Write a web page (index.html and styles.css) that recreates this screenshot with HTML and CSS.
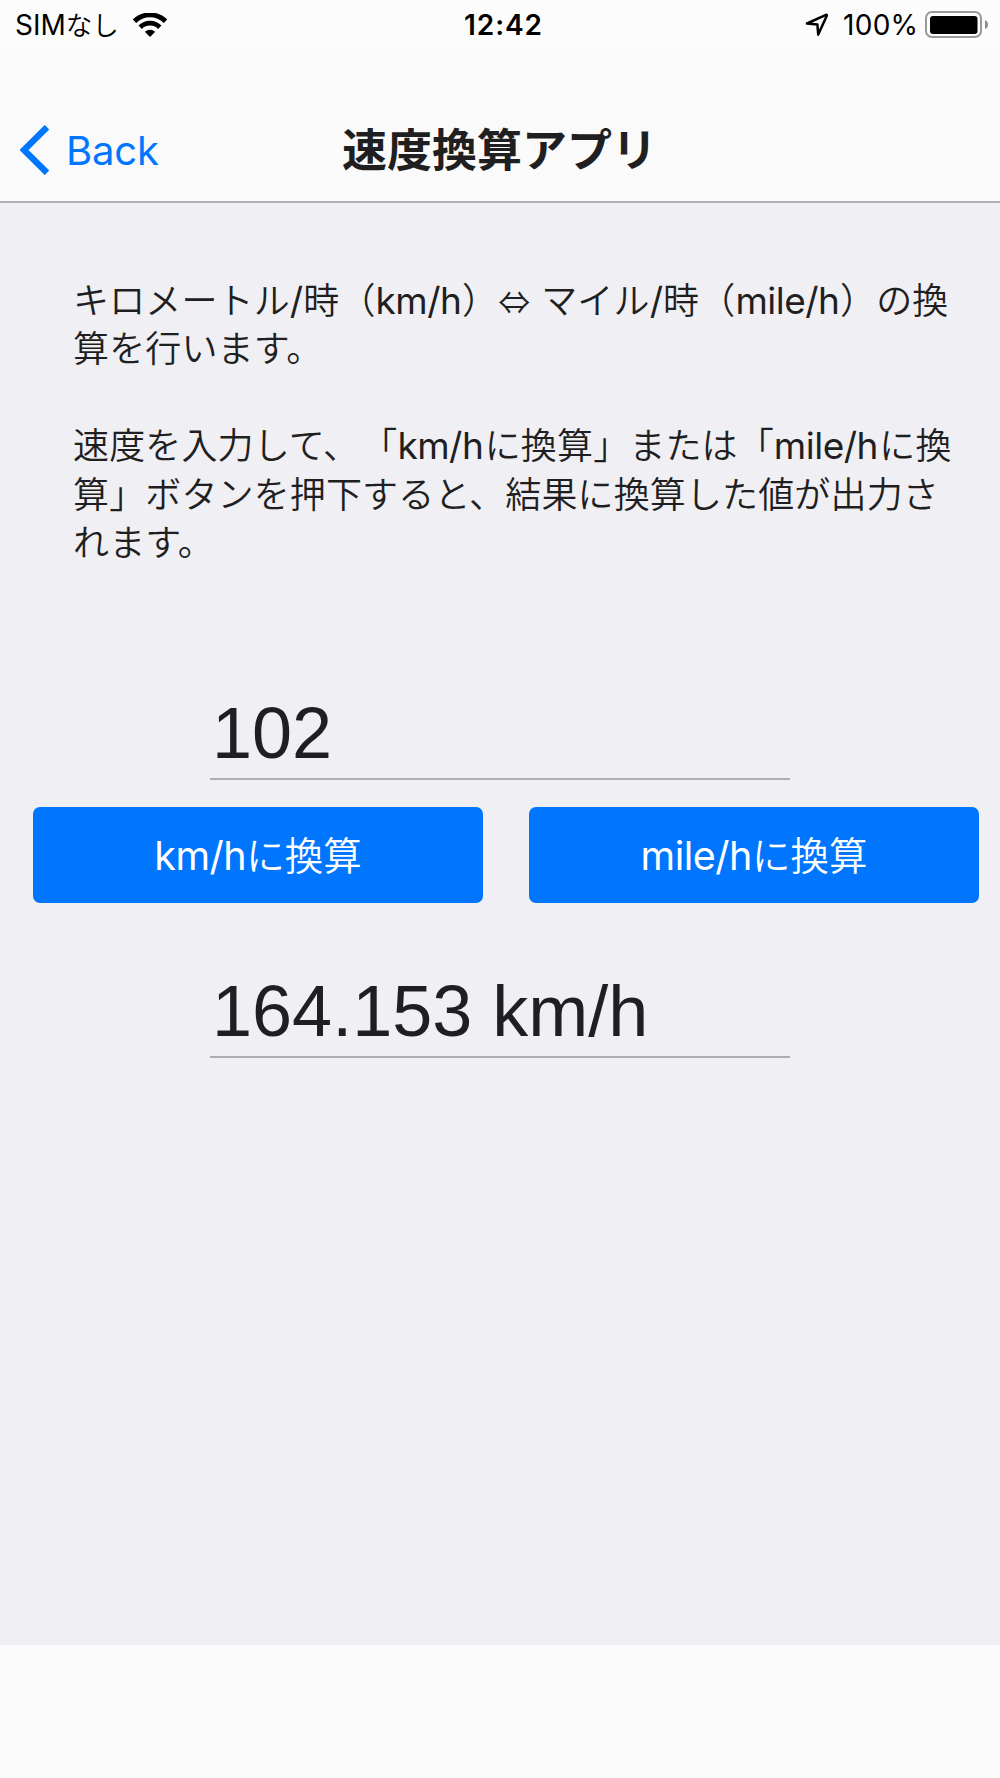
FILE: index.html
```html
<!DOCTYPE html>
<html lang="ja">
<head>
  <meta charset="UTF-8" />
  <meta name="viewport" content="width=device-width, initial-scale=1.0" />
  <title>速度換算アプリ</title>
  <link rel="stylesheet" href="styles.css">
</head>
<body>
<div class="status-bar">
  <div class="status-left">
    <span class="carrier">SIM<span class="kana">なし</span></span>
    <svg class="wifi" width="34" height="24" viewBox="0 0 34 24">
      <path d="M1.5 8.2 A22 22 0 0 1 32.5 8.2" fill="none" stroke="#000" stroke-width="4.8"/>
      <path d="M7.2 14.2 A14 14 0 0 1 26.8 14.2" fill="none" stroke="#000" stroke-width="4.8"/>
      <path d="M11.8 18.8 Q17 14.8 22.2 18.8 L17 24 Z" fill="#000"/>
    </svg>
  </div>
  <span class="clock">12:42</span>
  <div class="status-right">
    <svg class="location" width="24" height="24" viewBox="0 0 24 24">
      <path d="M2 10.5 L21 1.9 Q22.2 1.6 21.7 3 L13.2 21.6 L12.4 11.5 Z" fill="none" stroke="#000" stroke-width="2.5" stroke-linejoin="round"/>
    </svg>
    <span class="percent">100%</span>
    <svg class="battery" width="64" height="28" viewBox="0 0 64 28">
      <rect x="1" y="1" width="55" height="25" rx="6" fill="none" stroke="#999" stroke-width="2"/>
      <rect x="5" y="5" width="47.5" height="18" rx="3" fill="#000"/>
      <path d="M60 9 Q63 10.500 63 13.500 Q63 16.500 60 18 Z" fill="#8c8c8c"/>
    </svg>
  </div>
</div>
<header class="nav-bar">
  <a class="back">
    <svg width="30" height="50" viewBox="0 0 30 50"><path d="M27 2.200 L4 25 L27 47.800" fill="none" stroke="#0076ff" stroke-width="6.4"/></svg>
    <span>Back</span>
  </a>
  <h1>速度換算アプリ</h1>
</header>
<main class="content">
  <p>キロメートル<span class="en">/</span>時（<span class="en">km/h</span>）<span class="arrow">⇔</span>マイル<span class="en">/</span>時（<span class="en">mile/h</span>）の換<br>算を行います。</p>
  <p>速度を入力して、<span class="quote">「</span><span class="en">km/h</span>に換算」または「<span class="en">mile/h</span>に換<br>算」ボタンを押下すると、結果に換算した値が出力さ<br>れます。</p>
  <input class="value" type="text" id="speed" value="102">
  <div class="buttons">
    <button onclick="toKm()"><span class="en">km/h</span>に換算</button>
    <button onclick="toMile()"><span class="en">mile/h</span>に換算</button>
  </div>
  <input class="value" type="text" id="result" value="164.153 km/h" readonly>
</main>
<script>
const KM_PER_MILE = 1.609344;

function toKm() {
  const v = parseFloat(document.getElementById("speed").value);
  if (isNaN(v)) return;
  document.getElementById("result").value = (v * KM_PER_MILE).toFixed(3) + " km/h";
}

function toMile() {
  const v = parseFloat(document.getElementById("speed").value);
  if (isNaN(v)) return;
  document.getElementById("result").value = (v / KM_PER_MILE).toFixed(3) + " mile/h";
}
</script>
</body>
</html>
```
FILE: styles.css
```css
* {
  box-sizing: border-box;
}
body {
  margin: 0;
  height: 1778px;
  background: #fbfbfb;
  color: #1f1f21;
  font-family: Inter, 'Noto Sans CJK JP', sans-serif;
  text-spacing-trim: space-all;
}
.status-bar {
  display: grid;
  grid-template-columns: 1fr auto 1fr;
  align-items: center;
  height: 48px;
  padding: 0 11px 0 15px;
  background: #fcfcfc;
  color: #000;
  font-size: 28px;
  line-height: 50px;
}
.status-left, .status-right {
  display: flex;
  align-items: center;
}
.status-right {
  justify-content: flex-end;
}
.carrier {
  width: 118px;
  white-space: nowrap;
}
.kana {
  font-weight: 350;
  font-size: 26.5px;
}
.wifi {
  margin-bottom: 1px;
}
.clock {
  font-weight: 600;
  padding-left: 3px;
  letter-spacing: 0.9px;
}
.percent {
  width: 82px;
  padding-left: 14px;
  letter-spacing: 0.3px;
  white-space: nowrap;
}
.battery {
  margin: 0 0 1px 14px;
}
.nav-bar {
  display: grid;
  grid-template-columns: 1fr auto 1fr;
  align-items: center;
  height: 155px;
  padding: 51px 20px 0 20px;
  background: #fafafa;
  border-bottom: 2px solid #b2b2b2;
}
.back {
  display: flex;
  align-items: center;
  gap: 16px;
  color: #0076ff;
  font-size: 40px;
  letter-spacing: -0.2px;
}
h1 {
  margin: 2px 1px 0 0;
  font-size: 45px;
  line-height: 60px;
  font-weight: 700;
}
.content {
  height: 1442px;
  padding-top: 71px;
  background: #efeff4;
}
p {
  margin: 0 0 48.4px 73px;
  font-family: 'Noto Sans CJK JP', sans-serif;
  font-size: 36px;
  font-weight: 350;
  line-height: 48.4px;
  letter-spacing: 0.14px;
  white-space: nowrap;
}
.en {
  font-family: Inter, sans-serif;
  font-weight: 400;
  font-size: 37px;
  line-height: 1;
  letter-spacing: -0.5px;
}
p .en {
  margin-right: 0.6px;
}
.quote {
  margin-left: 2px;
}
.quote ~ .en {
  margin-right: 1.4px;
}
.arrow {
  display: inline-block;
  width: 43px;
  font-family: 'Noto Sans CJK JP', sans-serif;
  font-size: 32px;
  line-height: 1;
}
.value {
  display: block;
  width: 580px;
  height: 88px;
  margin: 0 auto;
  padding: 0 0 4px 2px;
  background: none;
  border: none;
  border-bottom: 2px solid #afafaf;
  border-radius: 0;
  outline: none;
  color: #1f1f21;
  font-family: 'Liberation Sans', sans-serif;
  font-size: 72px;
}
p + .value {
  margin-top: 128px;
}
.buttons {
  display: flex;
  gap: 46px;
  margin: 27px 21px 67px 33px;
}
button {
  flex: 1;
  height: 96px;
  padding: 0 0 5px;
  background: #0076ff;
  color: white;
  border: none;
  border-radius: 7px;
  font-family: 'Noto Sans CJK JP', sans-serif;
  font-size: 38.5px;
  font-weight: 350;
  cursor: pointer;
}
button .en {
  font-size: 39.5px;
}
```
